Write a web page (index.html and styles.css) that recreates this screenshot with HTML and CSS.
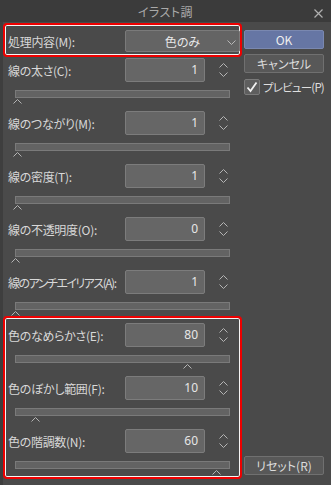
FILE: index.html
```html
<!DOCTYPE html>
<html lang="ja">
<head>
<meta charset="UTF-8">
<title>イラスト調</title>
<link rel="stylesheet" href="styles.css">
</head>
<body>
<div class="dialog">
	<!-- title bar -->
	<div class="titlebar">
		<span class="title">イラスト調</span>
		<svg class="closeBtn" width="9" height="9" viewBox="0 0 9 9">
			<path d="M0.5 0.5 L8.5 8.5 M8.5 0.5 L0.5 8.5" stroke="#b0b0b0" stroke-width="1.2" fill="none"/>
		</svg>
	</div>

	<div class="content">
		<div class="settings">
			<!-- mode select -->
			<div class="mark modeGroup">
				<div class="modeRow">
					<span class="label modeLabel">処理内容(M):</span>
					<div class="dropdown">
						<span>色のみ</span>
						<svg class="dropArrow" width="9" height="5" viewBox="0 0 9 5">
							<polyline points="0.5,0.5 4.5,4.5 8.5,0.5" stroke="#b8b8b8" stroke-width="1" fill="none"/>
						</svg>
					</div>
				</div>
			</div>

			<!-- line settings -->
			<div class="params">
				<div class="param">
					<div class="paramTop">
						<span class="label">線の太さ(C):</span>
						<div class="numBox">1</div>
						<div class="spinner"><svg width="9" height="5" viewBox="0 0 9 5"><polyline points="0.5,4.5 4.5,0.5 8.5,4.5"/></svg><svg width="9" height="5" viewBox="0 0 9 5"><polyline points="0.5,0.5 4.5,4.5 8.5,0.5"/></svg></div>
					</div>
					<div class="slider"></div>
					<div class="thumbTrack"><svg class="thumb" style="left: 1%;" width="9" height="5" viewBox="0 0 9 5"><polyline points="0.5,4.5 4.5,0.5 8.5,4.5"/></svg></div>
				</div>
				<div class="param">
					<div class="paramTop">
						<span class="label">線のつながり(M):</span>
						<div class="numBox">1</div>
						<div class="spinner"><svg width="9" height="5" viewBox="0 0 9 5"><polyline points="0.5,4.5 4.5,0.5 8.5,4.5"/></svg><svg width="9" height="5" viewBox="0 0 9 5"><polyline points="0.5,0.5 4.5,4.5 8.5,0.5"/></svg></div>
					</div>
					<div class="slider"></div>
					<div class="thumbTrack"><svg class="thumb" style="left: 1%;" width="9" height="5" viewBox="0 0 9 5"><polyline points="0.5,4.5 4.5,0.5 8.5,4.5"/></svg></div>
				</div>
				<div class="param">
					<div class="paramTop">
						<span class="label">線の密度(T):</span>
						<div class="numBox">1</div>
						<div class="spinner"><svg width="9" height="5" viewBox="0 0 9 5"><polyline points="0.5,4.5 4.5,0.5 8.5,4.5"/></svg><svg width="9" height="5" viewBox="0 0 9 5"><polyline points="0.5,0.5 4.5,4.5 8.5,0.5"/></svg></div>
					</div>
					<div class="slider"></div>
					<div class="thumbTrack"><svg class="thumb" style="left: 1%;" width="9" height="5" viewBox="0 0 9 5"><polyline points="0.5,4.5 4.5,0.5 8.5,4.5"/></svg></div>
				</div>
				<div class="param">
					<div class="paramTop">
						<span class="label">線の不透明度(O):</span>
						<div class="numBox">0</div>
						<div class="spinner"><svg width="9" height="5" viewBox="0 0 9 5"><polyline points="0.5,4.5 4.5,0.5 8.5,4.5"/></svg><svg width="9" height="5" viewBox="0 0 9 5"><polyline points="0.5,0.5 4.5,4.5 8.5,0.5"/></svg></div>
					</div>
					<div class="slider"></div>
					<div class="thumbTrack"><svg class="thumb" style="left: 0%;" width="9" height="5" viewBox="0 0 9 5"><polyline points="0.5,4.5 4.5,0.5 8.5,4.5"/></svg></div>
				</div>
				<div class="param">
					<div class="paramTop">
						<span class="label narrow">線のアンチエイリアス(A):</span>
						<div class="numBox">1</div>
						<div class="spinner"><svg width="9" height="5" viewBox="0 0 9 5"><polyline points="0.5,4.5 4.5,0.5 8.5,4.5"/></svg><svg width="9" height="5" viewBox="0 0 9 5"><polyline points="0.5,0.5 4.5,4.5 8.5,0.5"/></svg></div>
					</div>
					<div class="slider"></div>
					<div class="thumbTrack"><svg class="thumb" style="left: 0%;" width="9" height="5" viewBox="0 0 9 5"><polyline points="0.5,4.5 4.5,0.5 8.5,4.5"/></svg></div>
				</div>
			</div>

			<!-- color settings -->
			<div class="params mark colorGroup">
				<div class="param">
					<div class="paramTop">
						<span class="label">色のなめらかさ(E):</span>
						<div class="numBox">80</div>
						<div class="spinner"><svg width="9" height="5" viewBox="0 0 9 5"><polyline points="0.5,4.5 4.5,0.5 8.5,4.5"/></svg><svg width="9" height="5" viewBox="0 0 9 5"><polyline points="0.5,0.5 4.5,4.5 8.5,0.5"/></svg></div>
					</div>
					<div class="slider"></div>
					<div class="thumbTrack"><svg class="thumb" style="left: 80%;" width="9" height="5" viewBox="0 0 9 5"><polyline points="0.5,4.5 4.5,0.5 8.5,4.5"/></svg></div>
				</div>
				<div class="param">
					<div class="paramTop">
						<span class="label">色のぼかし範囲(F):</span>
						<div class="numBox">10</div>
						<div class="spinner"><svg width="9" height="5" viewBox="0 0 9 5"><polyline points="0.5,4.5 4.5,0.5 8.5,4.5"/></svg><svg width="9" height="5" viewBox="0 0 9 5"><polyline points="0.5,0.5 4.5,4.5 8.5,0.5"/></svg></div>
					</div>
					<div class="slider"></div>
					<div class="thumbTrack"><svg class="thumb" style="left: 9.5%;" width="9" height="5" viewBox="0 0 9 5"><polyline points="0.5,4.5 4.5,0.5 8.5,4.5"/></svg></div>
				</div>
				<div class="param">
					<div class="paramTop">
						<span class="label">色の階調数(N):</span>
						<div class="numBox">60</div>
						<div class="spinner"><svg width="9" height="5" viewBox="0 0 9 5"><polyline points="0.5,4.5 4.5,0.5 8.5,4.5"/></svg><svg width="9" height="5" viewBox="0 0 9 5"><polyline points="0.5,0.5 4.5,4.5 8.5,0.5"/></svg></div>
					</div>
					<div class="slider"></div>
					<div class="thumbTrack"><svg class="thumb" style="left: 93.5%;" width="9" height="5" viewBox="0 0 9 5"><polyline points="0.5,4.5 4.5,0.5 8.5,4.5"/></svg></div>
				</div>
			</div>
		</div>

		<!-- buttons -->
		<div class="side">
			<div class="btn okBtn">OK</div>
			<div class="btn">キャンセル</div>
			<div class="previewRow">
				<span class="checkBox">
					<svg width="14" height="14" viewBox="0 0 14 14"><polyline points="2.5,7.5 5.5,11 11.5,2.5" stroke="#f2f2f2" stroke-width="1.8" fill="none"/></svg>
				</span>
				<span class="previewLabel">プレビュー(P)</span>
			</div>
			<div class="btn resetBtn">リセット(R)</div>
		</div>
	</div>
</div>
</body>
</html>
```
FILE: styles.css
```css
html, body {
	margin: 0;
	padding: 0;
}
body {
	background-color: #4a4a4a;
	font-family: "Noto Sans CJK JP", "Noto Sans", sans-serif;
	font-size: 12px;
	color: #dedede;
	font-feature-settings: "palt";
}
.dialog {
	width: 331px;
	height: 485px;
	display: flex;
	flex-direction: column;
	background: #4a4a4a;
}
.titlebar {
	height: 22px;
	flex: none;
	background: #3b3b3b;
	display: flex;
	align-items: center;
	justify-content: center;
	position: relative;
}
.title {
	color: #a9a9a9;
	font-size: 12px;
	letter-spacing: 0.5px;
}
.closeBtn {
	position: absolute;
	right: 8px;
	top: 9px;
}

.content {
	flex: 1;
	display: flex;
	border-left: 3px solid #3e3e3e;
}
.settings {
	width: 235px;
	padding: 3px 2px 0 2px;
	display: flex;
	flex-direction: column;
}
.mark {
	outline: 2px solid #ee0000;
	border-radius: 2px;
	box-shadow: inset 0 0 0 1px #f4f4f4;
}

/* mode row */
.modeGroup {
	padding: 5px 0 3px 0;
}
.modeRow {
	display: flex;
	align-items: center;
	padding-left: 3px;
}
.modeLabel {
	width: 112px;
}
.dropdown {
	width: 114px;
	height: 20px;
	background: #646464;
	border: 1px solid #7a7a7a;
	border-radius: 2px;
	display: flex;
	align-items: center;
	justify-content: center;
	position: relative;
	color: #e8e8e8;
}
.dropArrow {
	position: absolute;
	right: 3px;
	top: 9px;
}

/* sliders */
.params {
	margin-top: 3px;
	display: flex;
	flex-direction: column;
	gap: 5px;
}
.colorGroup {
	margin-top: 0;
	padding-top: 5px;
}
.param {
	padding-left: 3px;
}
.paramTop {
	display: flex;
	align-items: center;
	height: 24px;
}
.label {
	width: 117px;
	flex: none;
	white-space: nowrap;
	color: #d8d8d8;
	letter-spacing: -0.3px;
}
.narrow {
	letter-spacing: -1.5px;
}
.numBox {
	width: 72px;
	height: 22px;
	background: #666666;
	border: 1px solid #7c7c7c;
	border-radius: 2px;
	text-align: right;
	padding-right: 6px;
	line-height: 22px;
	color: #e6e6e6;
	font-family: "Noto Sans", sans-serif;
	font-size: 12px;
}
.spinner {
	margin-left: 14px;
	display: flex;
	flex-direction: column;
	gap: 4px;
}
.spinner polyline, .thumb polyline {
	stroke: #b4b4b4;
	stroke-width: 1;
	fill: none;
}
.slider {
	margin: 8px 0 0 7px;
	width: 213px;
	height: 6px;
	background: #636363;
	border: 1px solid #7a7a7a;
}
.thumbTrack {
	position: relative;
	margin-left: 7px;
	width: 215px;
	height: 8px;
}
.thumb {
	position: absolute;
	top: 1px;
	margin-left: -4px;
}

/* right column */
.side {
	width: 80px;
	padding: 8px 0 10px 2px;
	display: flex;
	flex-direction: column;
}
.btn {
	height: 17px;
	border: 1px solid #707070;
	border-radius: 2px;
	background: #585858;
	color: #dcdcdc;
	display: flex;
	align-items: center;
	justify-content: center;
	margin-bottom: 5px;
}
.okBtn {
	background: #6676a4;
	border-color: #7a88b0;
	color: #eeeeee;
	margin-bottom: 5px;
}
.previewRow {
	display: flex;
	align-items: center;
	margin-top: 1px;
	white-space: nowrap;
}
.checkBox {
	width: 14px;
	height: 14px;
	flex: none;
	border: 1px solid #7a7a7a;
	background: #5e5e5e;
	border-radius: 2px;
}
.checkBox svg {
	display: block;
}
.previewLabel {
	margin-left: 3px;
	color: #dedede;
	font-size: 11.5px;
	letter-spacing: -0.8px;
}
.resetBtn {
	margin-top: auto;
	margin-bottom: 0;
}
```
